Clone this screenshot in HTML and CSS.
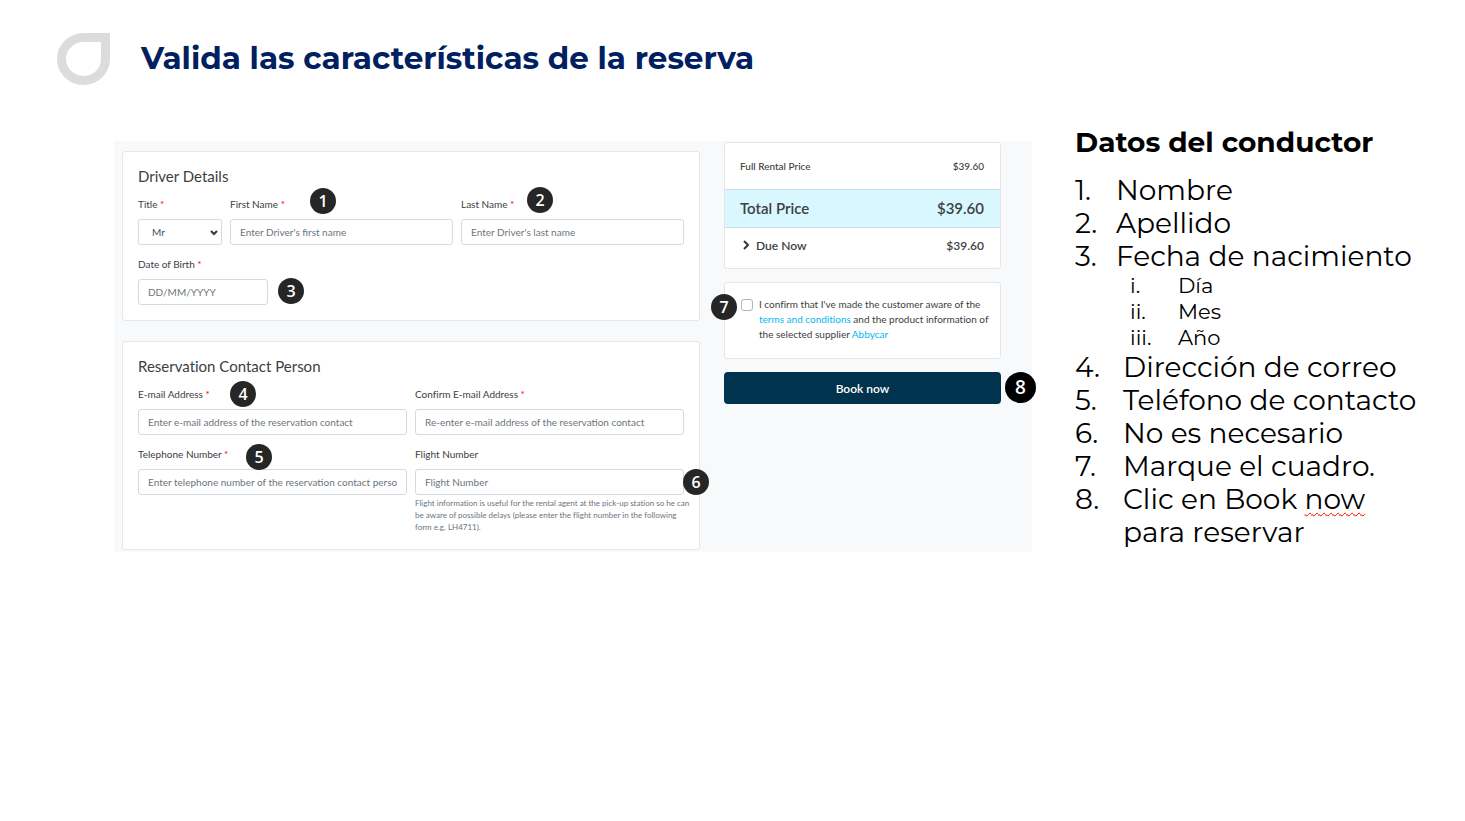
FILE: index.html
```
<!DOCTYPE html>
<html lang="es">
<head>
    <meta charset="UTF-8">
    <meta name="viewport" content="width=device-width, initial-scale=1.0">
    <title>Valida las características de la reserva</title>
    <link rel="stylesheet" href="styles.css">
</head>
<body>
    <header class="header">
        <svg class="logo" viewBox="0 0 53 53" aria-hidden="true">
            <path d="M26.5 4.5H48.5V26.5A22 21.5 0 1 1 26.5 4.5Z" fill="none" stroke="#dcdcdc" stroke-width="9"/>
        </svg>
        <h1>Valida las características de la reserva</h1>
    </header>

    <main class="content">
        <form class="booking" lang="en">
            <div class="forms">
                <section class="card">
                    <h2>Driver Details</h2>
                    <div class="row driver-row">
                        <div class="field">
                            <label for="title">Title <span class="req">*</span></label>
                            <div class="select-wrap">
                                <select id="title">
                                    <option>Mr</option>
                                    <option>Mrs</option>
                                </select>
                                <svg class="arrow" viewBox="0 0 8 6" aria-hidden="true"><path d="M1 1l3 3 3-3"/></svg>
                            </div>
                        </div>
                        <div class="field">
                            <label for="first-name">First Name <span class="req">*</span></label>
                            <input type="text" id="first-name" placeholder="Enter Driver's first name">
                            <span class="badge badge-1">1</span>
                        </div>
                        <div class="field">
                            <label for="last-name">Last Name <span class="req">*</span></label>
                            <input type="text" id="last-name" placeholder="Enter Driver's last name">
                            <span class="badge badge-2">2</span>
                        </div>
                    </div>
                    <div class="field birth">
                        <label for="birth">Date of Birth <span class="req">*</span></label>
                        <input type="text" id="birth" placeholder="DD/MM/YYYY">
                        <span class="badge badge-3">3</span>
                    </div>
                </section>

                <section class="card">
                    <h2>Reservation Contact Person</h2>
                    <div class="row contact-row">
                        <div class="field">
                            <label for="email">E-mail Address <span class="req">*</span></label>
                            <input type="email" id="email" placeholder="Enter e-mail address of the reservation contact">
                            <span class="badge badge-4">4</span>
                        </div>
                        <div class="field">
                            <label for="email2">Confirm E-mail Address <span class="req">*</span></label>
                            <input type="email" id="email2" placeholder="Re-enter e-mail address of the reservation contact">
                        </div>
                        <div class="field">
                            <label for="phone">Telephone Number <span class="req">*</span></label>
                            <input type="tel" id="phone" placeholder="Enter telephone number of the reservation contact person">
                            <span class="badge badge-5">5</span>
                        </div>
                        <div class="field">
                            <label for="flight">Flight Number</label>
                            <input type="text" id="flight" placeholder="Flight Number">
                            <p class="help">Flight information is useful for the rental agent at the pick-up station so he can be aware of possible delays (please enter the flight number in the following form e.g. LH4711).</p>
                            <span class="badge badge-6">6</span>
                        </div>
                    </div>
                </section>
            </div>

            <div class="summary">
                <div class="prices">
                    <div class="price full"><span>Full Rental Price</span><span>$39.60</span></div>
                    <div class="price total"><span>Total Price</span><span>$39.60</span></div>
                    <div class="price due">
                        <span class="due-label"><svg viewBox="0 0 6 10" aria-hidden="true"><path d="M1 1l4 4-4 4"/></svg>Due Now</span>
                        <span>$39.60</span>
                    </div>
                </div>

                <div class="confirm">
                    <input type="checkbox" id="confirm">
                    <label for="confirm">I confirm that I've made the customer aware of the <a href="#">terms and conditions</a> and the product information of the selected supplier <a href="#">Abbycar</a></label>
                    <span class="badge badge-7">7</span>
                </div>

                <div class="book">
                    <button type="button">Book now</button>
                    <span class="badge badge-8">8</span>
                </div>
            </div>
        </form>

        <aside class="steps">
            <h2>Datos del conductor</h2>
            <ol>
                <li><span>1.</span>Nombre</li>
                <li><span>2.</span>Apellido</li>
                <li><span>3.</span>Fecha de nacimiento</li>
                <li class="nested">
                    <ol class="sub">
                        <li><span>i.</span>Día</li>
                        <li><span>ii.</span>Mes</li>
                        <li><span>iii.</span>Año</li>
                    </ol>
                </li>
                <li class="wide"><span>4.</span>Dirección de correo</li>
                <li class="wide"><span>5.</span>Teléfono de contacto</li>
                <li class="wide"><span>6.</span>No es necesario</li>
                <li class="wide"><span>7.</span>Marque el cuadro.</li>
                <li class="wide"><span>8.</span><div>Clic en Book <u>now</u><br>para reservar</div></li>
            </ol>
        </aside>
    </main>
</body>
</html>
```

FILE: styles.css
```
* {
    box-sizing: border-box;
}
body {
    margin: 0;
    background: white;
    color: black;
    font-family: "Montserrat", "Inter", sans-serif;
}
h1, h2, p, ol {
    margin: 0;
    padding: 0;
}
.header {
    display: flex;
    align-items: center;
    gap: 31px;
    padding: 33px 57px 0;
}
.logo {
    width: 53px;
    height: 53px;
}
.header h1 {
    color: #002060;
    font-size: 31px;
    line-height: 40px;
    padding-bottom: 4px;
}
.content {
    display: grid;
    grid-template-columns: minmax(0, 918fr) minmax(0, 350fr);
    gap: 43px;
    align-items: start;
    padding: 55px 40px 0 114px;
}

/* booking form */
.booking {
    display: grid;
    grid-template-columns: minmax(0, 578fr) minmax(0, 277fr);
    gap: 24px;
    padding: 0 31px 2px 8px;
    background: #f8f9fb;
    color: #3c4043;
    font-family: "Lato", sans-serif;
    font-size: 10px;
    font-variant-ligatures: none;
}
.forms {
    display: flex;
    flex-direction: column;
    gap: 20px;
    padding-top: 10px;
}
.card, .prices, .confirm {
    background: white;
    border: 1px solid #e4e6e8;
    border-radius: 3px;
}
.card {
    padding: 14px 15px 15px;
}
.card h2 {
    margin-bottom: 10px;
    font-size: 15px;
    font-weight: 400;
    line-height: 20px;
}
.row {
    display: grid;
    gap: 11px 8px;
}
.driver-row {
    grid-template-columns: 84px 1fr 1fr;
    margin-bottom: 11px;
}
.contact-row {
    grid-template-columns: 1fr 1fr;
}
.field {
    position: relative;
    min-width: 0;
}
.field label {
    display: block;
    margin-bottom: 7px;
    line-height: 16px;
}
.req {
    color: red;
}
.field input, .field select {
    display: block;
    width: 100%;
    height: 26px;
    padding: 0 9px;
    border: 1px solid #d5dade;
    border-radius: 3px;
    background: white;
    color: #495057;
    font-family: inherit;
    font-size: 10px;
}
.field input::placeholder {
    color: #6c757d;
    opacity: 1;
}
.select-wrap {
    position: relative;
}
.field select {
    appearance: none;
    padding-left: 13px;
}
.arrow {
    position: absolute;
    top: 11px;
    right: 4px;
    width: 8px;
    height: 6px;
    fill: none;
    stroke: #343a40;
    stroke-width: 2;
    pointer-events: none;
}
.birth {
    width: 130px;
}
.help {
    margin: 2px -10px 1px 0;
    color: #6c757d;
    font-size: 8px;
    line-height: 12px;
}

/* price summary */
.summary {
    display: flex;
    flex-direction: column;
    gap: 13px;
    padding-top: 1px;
}
.price {
    display: flex;
    justify-content: space-between;
    align-items: center;
    padding: 0 16px 0 15px;
    font-weight: 500;
}
.full {
    height: 46px;
}
.total {
    height: 39px;
    padding-bottom: 2px;
    background: #d9f7ff;
    border-top: 1px solid #cfdfe4;
    border-bottom: 1px solid #cfdfe4;
    font-size: 15px;
    font-weight: 600;
}
.due {
    height: 40px;
    padding-bottom: 6px;
    font-size: 12px;
    font-weight: 600;
}
.due-label {
    display: flex;
    align-items: center;
    gap: 7px;
    padding-left: 3px;
}
.due-label svg {
    width: 6px;
    height: 10px;
    fill: none;
    stroke: #343a40;
    stroke-width: 2;
}
.confirm {
    position: relative;
    display: flex;
    align-items: flex-start;
    gap: 6px;
    padding: 14px 10px 16px 16px;
    line-height: 15px;
}
.confirm input {
    flex: none;
    appearance: none;
    width: 12px;
    height: 12px;
    margin: 2px 0 0;
    border: 1px solid #adb5bd;
    border-radius: 3px;
    background: white;
}
.confirm a {
    color: #00b9ef;
    text-decoration: none;
}
.book {
    position: relative;
}
.book button {
    display: block;
    width: 100%;
    height: 32px;
    border: none;
    border-radius: 4px;
    background: #00334d;
    color: white;
    font-family: inherit;
    font-size: 12px;
    font-weight: 600;
    cursor: pointer;
}

/* numbered markers */
.badge {
    position: absolute;
    width: 26px;
    height: 26px;
    border-radius: 50%;
    background: #262626;
    color: white;
    font-family: "Open Sans", sans-serif;
    font-size: 16px;
    font-weight: 600;
    line-height: 26px;
    text-align: center;
}
.badge-1 {
    top: -8px;
    left: 80px;
}
.badge-2 {
    top: -9px;
    left: 66px;
}
.badge-3 {
    top: 22px;
    left: 140px;
}
.badge-4 {
    top: -5px;
    left: 92px;
}
.badge-5 {
    top: -2px;
    left: 108px;
}
.badge-6 {
    top: 23px;
    right: -25px;
}
.badge-7 {
    top: 11px;
    left: -14px;
}
.badge-8 {
    top: 0;
    right: -35px;
    width: 31px;
    height: 31px;
    background: black;
    font-size: 19px;
    line-height: 31px;
}

/* instructions */
.steps {
    margin-top: -16px;
}
.steps h2 {
    margin-bottom: 15px;
    font-size: 28px;
    line-height: 34px;
}
.steps ol {
    list-style: none;
}
.steps li {
    display: grid;
    grid-template-columns: 41px 1fr;
    font-size: 28px;
    font-weight: 400;
    line-height: 33px;
    white-space: nowrap;
}
.steps .wide {
    grid-template-columns: 48px 1fr;
}
.steps .nested {
    display: block;
}
.steps .sub li {
    grid-template-columns: 48px 1fr;
    padding-left: 55px;
    font-size: 21px;
    line-height: 26px;
}
.steps u {
    text-decoration: underline wavy red 1px;
    text-underline-offset: 3px;
}
```
